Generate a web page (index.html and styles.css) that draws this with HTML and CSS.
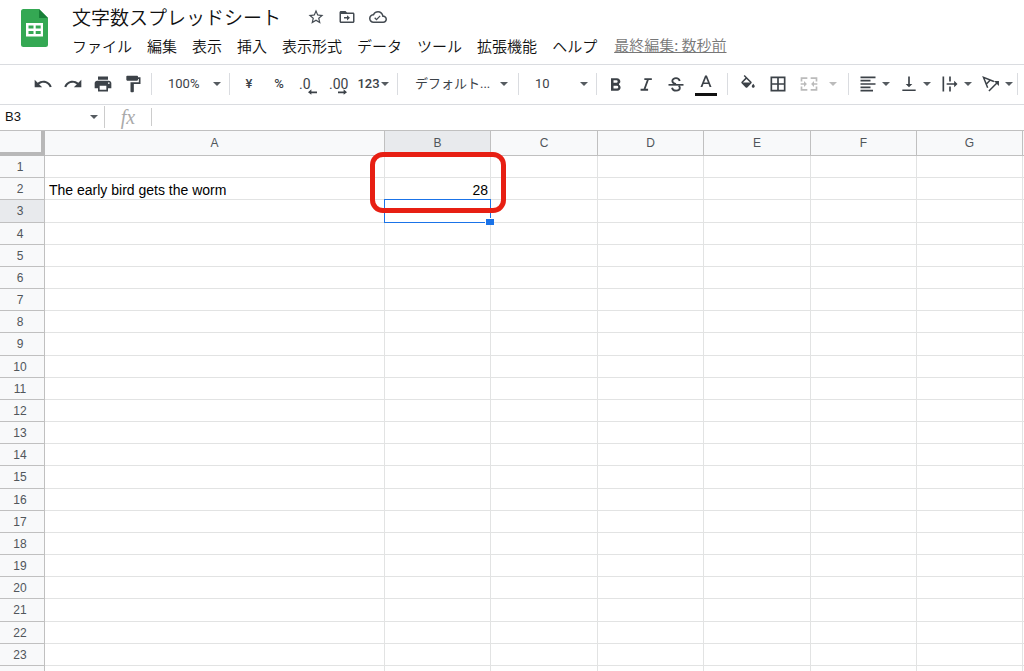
FILE: index.html
```html
<!DOCTYPE html>
<html lang="ja">
<head>
<meta charset="utf-8">
<meta name="viewport" content="width=device-width, initial-scale=1">
<title>文字数スプレッドシート</title>
<link rel="stylesheet" href="styles.css">
</head>
<body>
<svg class="defs" aria-hidden="true">
  <symbol id="caret" viewBox="0 0 8 4"><path d="M0 0h8L4 4z"/></symbol>
</svg>
<div class="app">
  <header class="header">
    <svg class="logo" viewBox="0 0 27 38" aria-hidden="true">
      <path fill="#34a853" d="M2.500 0H18l9 9v26.500a2.500 2.500 0 0 1-2.500 2.500h-22A2.500 2.500 0 0 1 0 35.500v-33A2.500 2.500 0 0 1 2.500 0z"/>
      <path fill="#188038" d="M18 0l9 9h-9z"/>
      <path fill="#fff" fill-rule="evenodd" d="M5 14h17v13.500H5zM7.500 16.500v3h5v-3zM14.700 16.500v3h5v-3zM7.500 22v3h5v-3zM14.700 22v3h5v-3z"/>
    </svg>
    <div class="heading">
      <div class="title-row">
        <h1 class="title">文字数スプレッドシート</h1>
        <button class="plain" aria-label="スター"><svg class="icon-doc" viewBox="0 0 24 24"><path d="M22 9.240l-7.190-.62L12 2 9.190 8.630 2 9.240l5.460 4.730L5.820 21 12 17.270 18.180 21l-1.630-7.030L22 9.240zM12 15.400l-3.760 2.270 1-4.280-3.320-2.880 4.380-.38L12 6.100l1.710 4.040 4.380.38-3.320 2.880 1 4.280L12 15.400z"/></svg></button>
        <button class="plain" aria-label="移動"><svg class="icon-doc" viewBox="0 0 24 24"><path d="M20 6h-8l-2-2H4c-1.100 0-2 .9-2 2v12c0 1.100.9 2 2 2h16c1.100 0 2-.9 2-2V8c0-1.100-.9-2-2-2zm0 12H4V8h16v10zM8 12v2h4v2.500l4-3.500-4-3.500V12z"/></svg></button>
        <button class="plain" aria-label="保存状況"><svg class="icon-doc" viewBox="0 0 24 24"><path d="M19.350 10.040C18.670 6.590 15.640 4 12 4 9.110 4 6.600 5.640 5.350 8.040 2.340 8.360 0 10.910 0 14c0 3.310 2.690 6 6 6h13c2.760 0 5-2.240 5-5 0-2.640-2.050-4.780-4.650-4.960zM19 18H6c-2.210 0-4-1.790-4-4 0-2.050 1.530-3.760 3.560-3.970l1.070-.11.5-.95C8.080 7.140 9.940 6 12 6c2.620 0 4.880 1.860 5.390 4.430l.3 1.500 1.530.11c1.560.1 2.780 1.410 2.780 2.960 0 1.650-1.350 3-3 3zm-9-3.800l-1.800-1.800-1.200 1.200 3 3 5.500-5.500-1.200-1.200z"/></svg></button>
      </div>
      <nav class="menu">
        <button class="plain">ファイル</button>
        <button class="plain">編集</button>
        <button class="plain">表示</button>
        <button class="plain">挿入</button>
        <button class="plain">表示形式</button>
        <button class="plain">データ</button>
        <button class="plain">ツール</button>
        <button class="plain">拡張機能</button>
        <button class="plain">ヘルプ</button>
        <a class="last-edit" href="#history">最終編集: 数秒前</a>
      </nav>
    </div>
  </header>

  <div class="toolbar" role="toolbar">
    <div class="group history">
      <button class="tool" aria-label="元に戻す"><svg class="icon" viewBox="0 0 24 24"><path d="M12.500 8c-2.650 0-5.050.99-6.900 2.600L2 7v9h9l-3.620-3.620c1.390-1.160 3.160-1.880 5.120-1.880 3.540 0 6.550 2.310 7.600 5.500l2.370-.78C21.080 11.030 17.150 8 12.500 8z"/></svg></button>
      <button class="tool" aria-label="やり直し"><svg class="icon" viewBox="0 0 24 24"><path d="M18.400 10.600C16.550 8.990 14.150 8 11.500 8c-4.650 0-8.580 3.030-9.960 7.220L3.900 16c1.050-3.190 4.050-5.500 7.600-5.500 1.950 0 3.730.72 5.120 1.880L13 16h9V7l-3.600 3.600z"/></svg></button>
      <button class="tool" aria-label="印刷"><svg class="icon" viewBox="0 0 24 24"><path d="M19 8H5c-1.660 0-3 1.340-3 3v6h4v4h12v-4h4v-6c0-1.660-1.340-3-3-3zm-3 11H8v-5h8v5zm3-7c-.55 0-1-.45-1-1s.45-1 1-1 1 .45 1 1-.45 1-1 1zm-1-9H6v4h12V3z"/></svg></button>
      <button class="tool" aria-label="書式を貼り付け"><svg class="icon" viewBox="0 0 24 24"><path d="M18 4V3c0-.55-.45-1-1-1H5c-.55 0-1 .45-1 1v4c0 .55.45 1 1 1h12c.55 0 1-.45 1-1V6h1v4H9v11c0 .55.45 1 1 1h2c.55 0 1-.45 1-1v-9h8V4h-3z"/></svg></button>
    </div>
    <div class="group">
      <label class="picker zoom"><select aria-label="ズーム"><option>100%</option></select><svg class="caret"><use href="#caret"/></svg></label>
    </div>
    <div class="group formats">
      <button class="tool">¥</button>
      <button class="tool">%</button>
      <button class="tool decimal" aria-label="小数点以下の桁数を減らす">.0<svg class="arrow" viewBox="0 0 8 5"><path d="M3 0v2h5v1.500H3V5L0 2.700z"/></svg></button>
      <button class="tool decimal" aria-label="小数点以下の桁数を増やす">.00<svg class="arrow" viewBox="0 0 8 5"><path d="M5 0v2H0v1.500h5V5l3-2.300z"/></svg></button>
      <button class="tool number">123<svg class="caret"><use href="#caret"/></svg></button>
    </div>
    <div class="group">
      <label class="picker family"><select aria-label="フォント"><option>デフォルト...</option></select><svg class="caret"><use href="#caret"/></svg></label>
    </div>
    <div class="group">
      <label class="picker size"><select aria-label="フォントサイズ"><option>10</option></select><svg class="caret"><use href="#caret"/></svg></label>
    </div>
    <div class="group text">
      <button class="tool" aria-label="太字"><svg class="icon" viewBox="0 0 24 24"><path d="M15.600 11.800c1-.7 1.600-1.800 1.600-2.800 0-2.300-1.700-4-4-4H6v15h7.800c2.100 0 3.700-1.700 3.700-3.800 0-1.500-.8-2.800-1.900-3.400zM9 7.500h3.500a1.500 1.500 0 0 1 0 3H9v-3zm4 10H9v-3.500h4a1.700 1.700 0 0 1 0 3.500z"/></svg></button>
      <button class="tool" aria-label="斜体"><svg class="icon" viewBox="0 0 24 24"><path d="M10 5v2.200h3L9.200 17.800H5.500V20h9v-2.200h-3l3.800-10.600H19V5z"/></svg></button>
      <button class="tool" aria-label="取り消し線"><svg class="icon" viewBox="0 0 24 24"><path d="M3 12h18v2H3z"/><path fill="none" stroke="currentColor" stroke-width="2.200" d="M16.500 8.500C16 6.500 14.200 5 12 5 9.600 5 7.600 6.300 7.600 8.400c0 2 1.500 3 4.400 3.700M7.200 16.500c.5 2.200 2.400 3.500 4.900 3.500 2.600 0 4.500-1.300 4.500-3.400 0-1-.4-1.900-1.400-2.600"/></svg></button>
      <button class="tool" aria-label="テキストの色"><svg class="icon-color" viewBox="0 0 22 24"><path d="M10.100 3.500h1.800l4.600 11.500h-1.900l-1.100-3H8.500l-1.100 3H5.500zM11 5.700l-1.900 4.800h3.800z"/><path fill="#111" d="M0 21h22v3H0z"/></svg></button>
    </div>
    <div class="group cells">
      <button class="tool" aria-label="塗りつぶしの色"><svg class="icon-fill" viewBox="0 0 24 24"><path d="M16.560 8.940L7.620 0 6.210 1.410l2.380 2.380-5.150 5.150c-.59.59-.59 1.540 0 2.120l5.500 5.500c.29.29.68.44 1.060.44s.77-.15 1.060-.44l5.500-5.500c.59-.58.59-1.530 0-2.120zM5.210 10L10 5.210 14.790 10H5.210zM19 11.500s-2 2.170-2 3.500c0 1.100.9 2 2 2s2-.9 2-2c0-1.330-2-3.500-2-3.500z"/></svg></button>
      <button class="tool" aria-label="枠線"><svg class="icon" viewBox="0 0 24 24"><path d="M3 3v18h18V3H3zm8 16H5v-6h6v6zm0-8H5V5h6v6zm8 8h-6v-6h6v6zm0-8h-6V5h6v6z"/></svg></button>
      <button class="tool menu-tool" aria-label="セルを結合" disabled><svg class="icon" viewBox="0 0 24 24"><path d="M2 4h8v2H4v3H2zM14 4h8v5h-2V6h-6zM2 15h2v3h6v2H2zM20 15h2v5h-8v-2h6zM2 11h4V8.500L9.500 12 6 15.500V13H2zM22 11h-4V8.500L14.500 12l3.500 3.500V13h4z"/></svg><svg class="caret"><use href="#caret"/></svg></button>
    </div>
    <div class="group align">
      <button class="tool menu-tool" aria-label="水平方向の配置"><svg class="icon" viewBox="0 0 24 24"><path d="M3 3h18v2H3zM3 7h12v2H3zM3 11h18v2H3zM3 15h12v2H3zM3 19h15v2H3z"/></svg><svg class="caret"><use href="#caret"/></svg></button>
      <button class="tool menu-tool" aria-label="垂直方向の配置"><svg class="icon" viewBox="0 0 24 24"><path d="M16 12h-3V3h-2v9H8l4 4 4-4zM4 18.500v2h16v-2H4z"/></svg><svg class="caret"><use href="#caret"/></svg></button>
      <button class="tool menu-tool" aria-label="テキストを折り返す"><svg class="icon" viewBox="0 0 24 24"><path d="M3 3h2v18H3zM11 3h2v6h-2zM11 15h2v6h-2zM8 11h9V8l4 4-4 4v-3H8z"/></svg><svg class="caret"><use href="#caret"/></svg></button>
      <button class="tool menu-tool" aria-label="テキストの回転"><svg class="icon" viewBox="0 0 24 24"><path fill="none" stroke="currentColor" stroke-width="1.800" d="M8 16.500L3 4l12.500 5M6.500 12l5-5M9.500 20.500L20 10"/><path d="M15.500 8.500H21.500v6z"/></svg><svg class="caret"><use href="#caret"/></svg></button>
    </div>
  </div>

  <div class="formula-bar">
    <div class="name-box"><input aria-label="名前ボックス" value="B3"><svg class="caret"><use href="#caret"/></svg></div>
    <label class="fx" for="formula">fx</label>
    <input id="formula" class="formula" aria-label="数式">
  </div>

  <main class="sheet">
    <table class="grid">
      <colgroup><col class="col-index"><col class="col-a"><col class="col-even"><col class="col-odd"><col class="col-even"><col class="col-odd"><col class="col-even"><col class="col-even"><col></colgroup>
      <thead>
        <tr><th class="corner"></th><th>A</th><th class="active">B</th><th>C</th><th>D</th><th>E</th><th>F</th><th>G</th><th></th></tr>
      </thead>
      <tbody>
        <tr><th>1</th><td></td><td class="anchor"><div class="callout"></div></td><td></td><td></td><td></td><td></td><td></td><td></td></tr>
        <tr><th>2</th><td>The early bird gets the worm</td><td class="num">28</td><td></td><td></td><td></td><td></td><td></td><td></td></tr>
        <tr><th class="active">3</th><td></td><td class="anchor"><div class="selection"></div></td><td></td><td></td><td></td><td></td><td></td><td></td></tr>
        <tr><th>4</th><td></td><td></td><td></td><td></td><td></td><td></td><td></td><td></td></tr>
        <tr><th>5</th><td></td><td></td><td></td><td></td><td></td><td></td><td></td><td></td></tr>
        <tr><th>6</th><td></td><td></td><td></td><td></td><td></td><td></td><td></td><td></td></tr>
        <tr><th>7</th><td></td><td></td><td></td><td></td><td></td><td></td><td></td><td></td></tr>
        <tr><th>8</th><td></td><td></td><td></td><td></td><td></td><td></td><td></td><td></td></tr>
        <tr><th>9</th><td></td><td></td><td></td><td></td><td></td><td></td><td></td><td></td></tr>
        <tr><th>10</th><td></td><td></td><td></td><td></td><td></td><td></td><td></td><td></td></tr>
        <tr><th>11</th><td></td><td></td><td></td><td></td><td></td><td></td><td></td><td></td></tr>
        <tr><th>12</th><td></td><td></td><td></td><td></td><td></td><td></td><td></td><td></td></tr>
        <tr><th>13</th><td></td><td></td><td></td><td></td><td></td><td></td><td></td><td></td></tr>
        <tr><th>14</th><td></td><td></td><td></td><td></td><td></td><td></td><td></td><td></td></tr>
        <tr><th>15</th><td></td><td></td><td></td><td></td><td></td><td></td><td></td><td></td></tr>
        <tr><th>16</th><td></td><td></td><td></td><td></td><td></td><td></td><td></td><td></td></tr>
        <tr><th>17</th><td></td><td></td><td></td><td></td><td></td><td></td><td></td><td></td></tr>
        <tr><th>18</th><td></td><td></td><td></td><td></td><td></td><td></td><td></td><td></td></tr>
        <tr><th>19</th><td></td><td></td><td></td><td></td><td></td><td></td><td></td><td></td></tr>
        <tr><th>20</th><td></td><td></td><td></td><td></td><td></td><td></td><td></td><td></td></tr>
        <tr><th>21</th><td></td><td></td><td></td><td></td><td></td><td></td><td></td><td></td></tr>
        <tr><th>22</th><td></td><td></td><td></td><td></td><td></td><td></td><td></td><td></td></tr>
        <tr><th>23</th><td></td><td></td><td></td><td></td><td></td><td></td><td></td><td></td></tr>
        <tr><th></th><td></td><td></td><td></td><td></td><td></td><td></td><td></td><td></td></tr>
      </tbody>
    </table>
  </main>
</div>
</body>
</html>
```
FILE: styles.css
```css
* { box-sizing: border-box; }

body {
  margin: 0;
  background: #fff;
  color: #111;
  font-family: "Liberation Sans", "Noto Sans CJK JP", sans-serif;
}

button, input, select {
  margin: 0;
  padding: 0;
  border: 0;
  background: none;
  color: inherit;
  font: inherit;
  outline: none;
}

.defs { display: none; }

.app {
  display: flex;
  flex-direction: column;
  height: 100vh;
  overflow: hidden;
}

.header {
  display: flex;
  gap: 24px;
  padding: 3px 21px;
  height: 64px;
  flex: none;
}

.logo { width: 27px; height: 38px; margin-top: 6px; }

.heading {
  display: flex;
  flex-direction: column;
  font-family: "Noto Sans CJK JP", sans-serif;
  font-weight: 350;
}

.title-row {
  display: flex;
  align-items: center;
  gap: 13px;
  height: 28px;
}

.title {
  margin: 0 13px 0 0;
  font-size: 19px;
  font-weight: 350;
  line-height: 28px;
}

.plain { display: block; white-space: nowrap; }

.icon-doc { display: block; width: 18px; height: 18px; fill: #444b52; }

.menu {
  display: flex;
  align-items: center;
  gap: 15px;
  height: 34px;
  font-size: 15px;
  line-height: 20px;
}

.last-edit {
  margin-left: 2px;
  padding-bottom: 2px;
  color: #777;
  white-space: nowrap;
}

.toolbar {
  display: flex;
  align-items: center;
  flex: none;
  height: 41px;
  padding-bottom: 2px;
  border-top: 1px solid #dadce0;
  border-bottom: 1px solid #dadce0;
  color: #3c4248;
  font-family: Roboto, "Noto Sans CJK JP", sans-serif;
  font-size: 13px;
}

.group {
  display: flex;
  align-items: center;
  flex: none;
  height: 22px;
  border-right: 1px solid #dadce0;
}

.history { padding: 0 3px 0 28px; }
.formats { padding: 0 5px 0 4px; font-weight: 500; }
.text { padding: 0 6px 0 4px; }
.cells { padding: 0 5px 0 5px; }
.align { padding-left: 4px; }

.tool {
  display: flex;
  align-items: center;
  justify-content: center;
  position: relative;
  width: 30px;
  height: 30px;
}

.icon { width: 20px; height: 20px; fill: currentColor; }
.icon-fill { width: 18px; height: 18px; fill: currentColor; }
.icon-color { width: 22px; height: 24px; fill: currentColor; }
.caret { width: 8px; height: 4px; fill: #555b60; }
.arrow { position: absolute; left: 14px; bottom: 4px; width: 9px; height: 6px; fill: currentColor; }
.decimal { justify-content: flex-start; padding-left: 5px; font-size: 14px; font-weight: 400; }
.number { width: 38px; gap: 1px; }
.menu-tool { width: 41px; gap: 4px; }
.menu-tool:disabled { width: 50px; gap: 10px; color: #bbb; }
.menu-tool:disabled .caret { fill: #bbb; }

.picker { display: grid; align-items: center; }
.picker select, .picker .caret { grid-area: 1 / 1; }
.picker select { appearance: none; width: 100%; height: 30px; opacity: 1; }
.picker .caret { justify-self: end; pointer-events: none; }
.zoom { width: 77px; padding: 0 8px 0 16px; }
.family { width: 120px; padding: 0 10px 0 17px; }
.size { width: 77px; padding: 0 8px 0 16px; }

.formula-bar {
  display: flex;
  align-items: center;
  flex: none;
  height: 25px;
  padding-bottom: 2px;
  color: #111;
  font-size: 13px;
}

.name-box {
  display: flex;
  align-items: center;
  width: 105px;
  height: 22px;
  padding: 0 6px 0 5px;
  border-right: 1px solid #ccc;
}

.name-box input { flex: 1; min-width: 0; }

.fx {
  width: 46px;
  color: #aaa;
  font: italic 20px/20px "Liberation Serif", serif;
  text-align: center;
}

.formula { flex: 1; height: 18px; padding-left: 8px; border-left: 1px solid #ccc; }

.sheet {
  flex: 1;
  min-height: 0;
  overflow: hidden;
  border-top: 1px solid #c0c0c0;
}

.grid {
  width: 100%;
  table-layout: fixed;
  border-collapse: separate;
  border-spacing: 0;
}

.col-index { width: 45px; }
.col-a { width: 340px; }
.col-even { width: 106px; }
.col-odd { width: 107px; }

.grid th {
  padding: 0 4px 0 0;
  border-right: 1px solid #c0c0c0;
  border-bottom: 1px solid #c0c0c0;
  background: #f8f9fa;
  color: #50565b;
  font-size: 12px;
  font-weight: 400;
  line-height: 16px;
}

.grid thead th { height: 25px; padding: 0; }
.grid thead .corner { border-right: 4px solid #b8b8b8; border-bottom: 4px solid #b8b8b8; }
.grid .active { background: #e8eaed; }

.grid td {
  padding: 3px 3px 0 4px;
  border-right: 1px solid #e2e3e3;
  border-bottom: 1px solid #e2e3e3;
  color: #000;
  font-size: 14px;
  line-height: 16px;
  white-space: nowrap;
}

.grid th:last-child, .grid td:last-child { padding: 0; border-right: 0; }
.grid tbody tr { height: 22px; }
.grid tbody tr:nth-child(6n + 3) { height: 23px; }
.grid .num { padding-right: 2px; text-align: right; }

.grid .anchor { position: relative; }

.selection {
  position: absolute;
  inset: -1px;
  border: 1px solid #1a73e8;
}

.selection::after {
  content: "";
  position: absolute;
  right: -4px;
  bottom: -3px;
  width: 8px;
  height: 6px;
  border: solid #fff;
  border-width: 1px 0 0 1px;
  background: #1a73e8;
}

.callout {
  position: absolute;
  z-index: 2;
  top: -4px;
  left: -15px;
  width: 136px;
  height: 61px;
  border: 5px solid #e71f13;
  border-radius: 13px;
}
```
